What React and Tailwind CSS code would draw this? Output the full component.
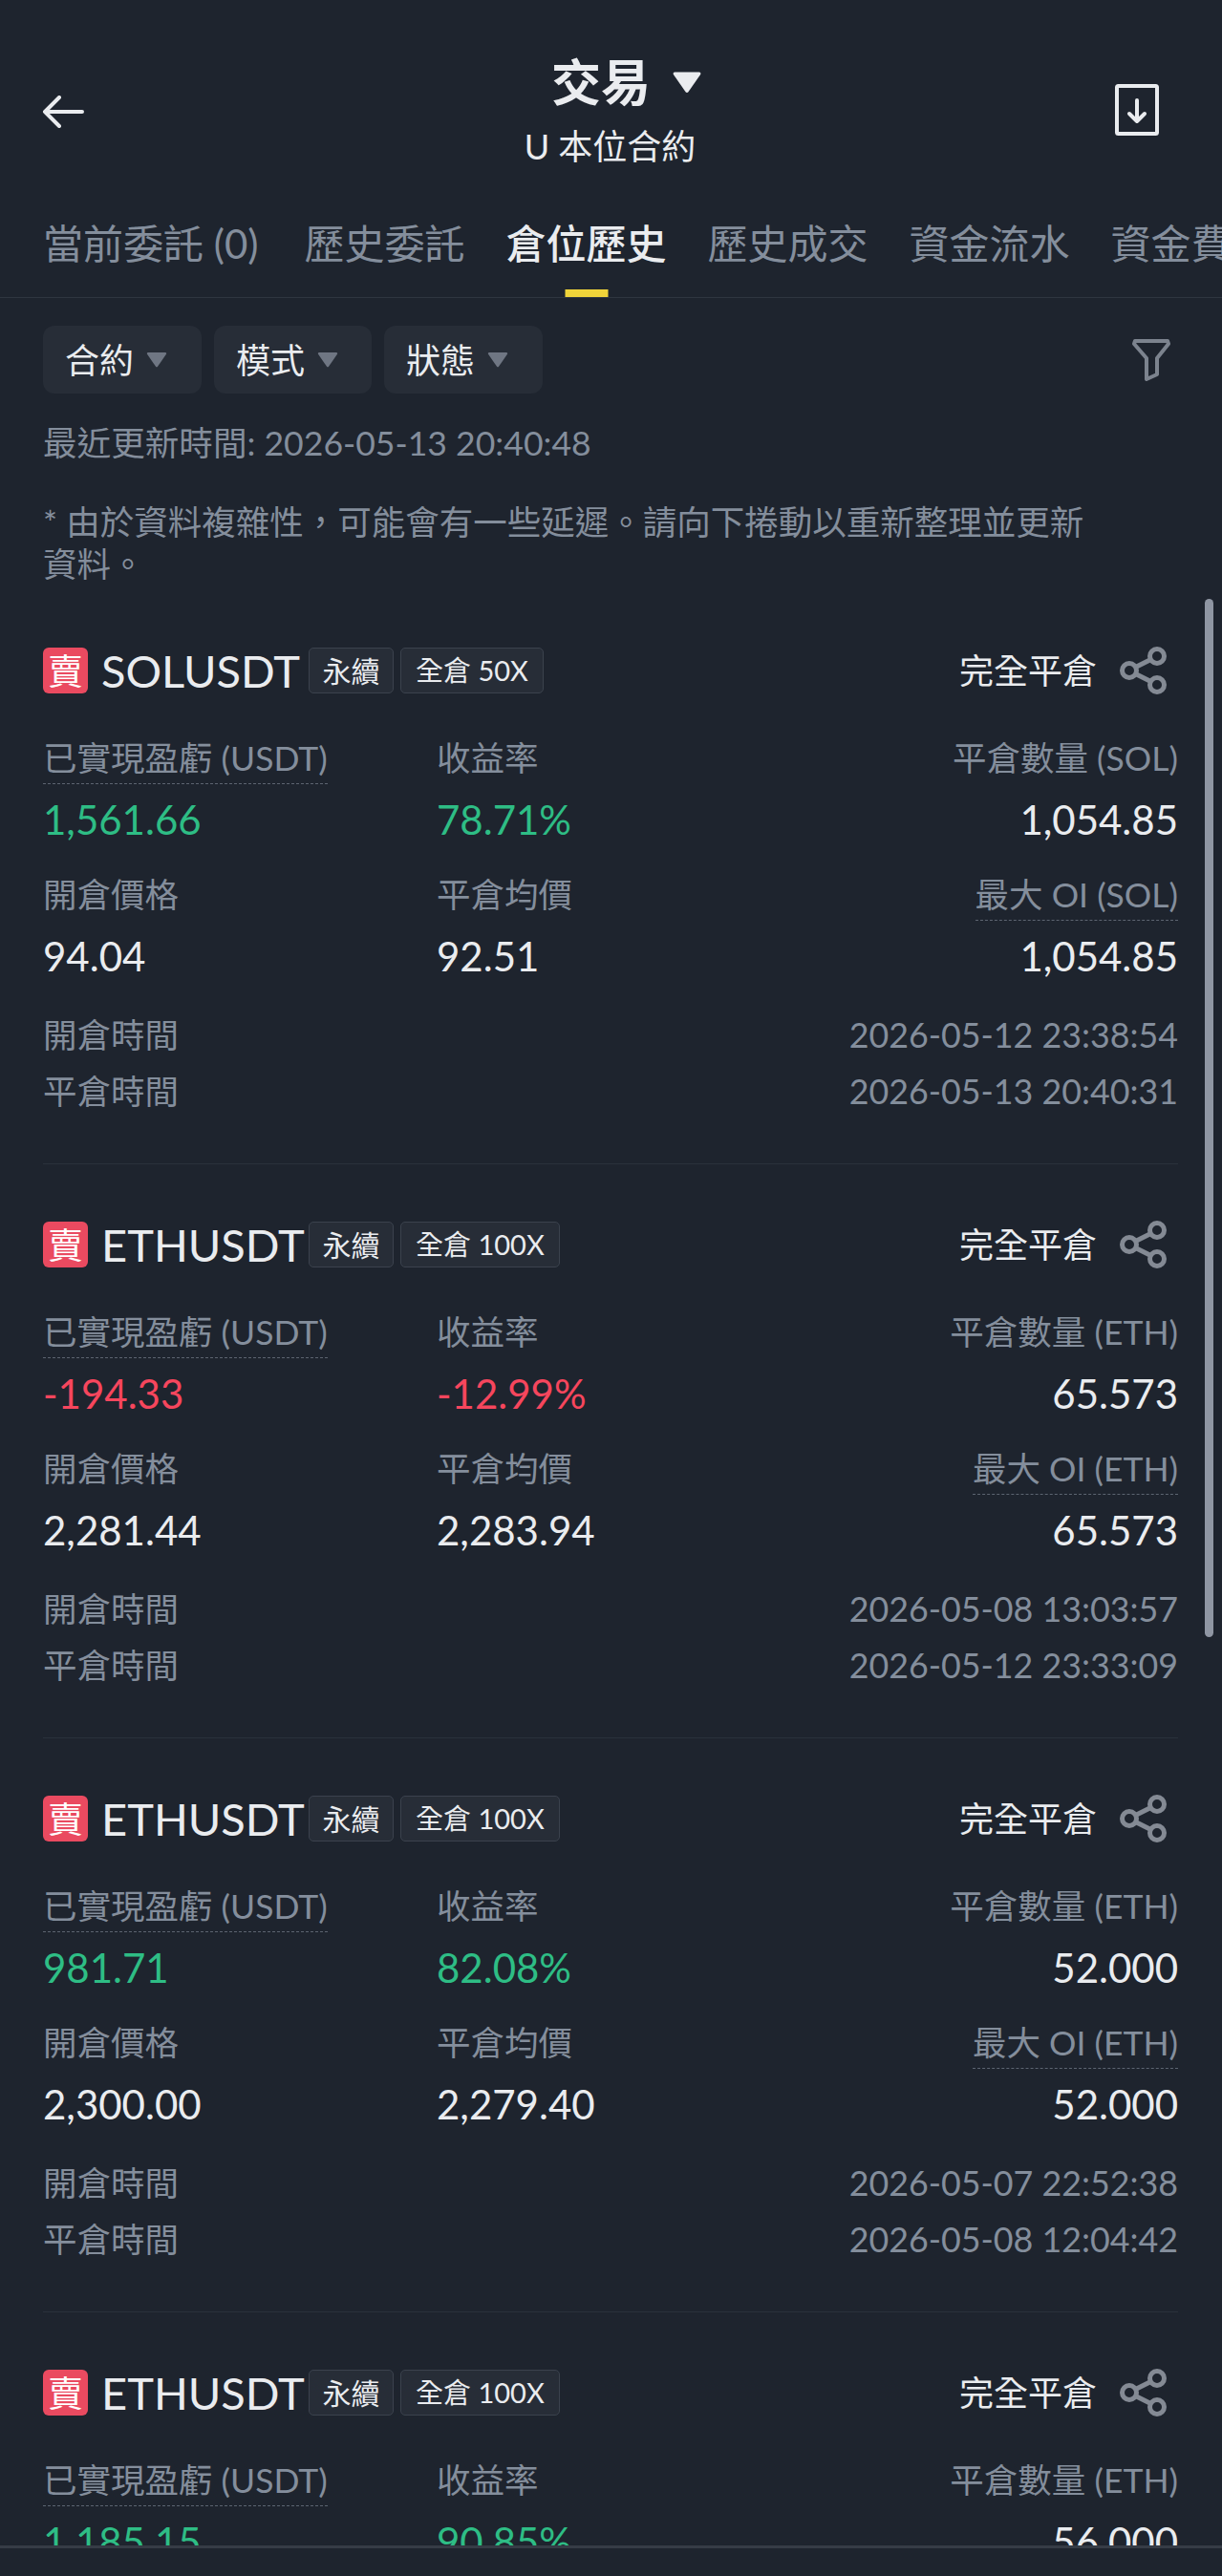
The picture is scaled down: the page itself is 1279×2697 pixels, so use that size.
const FONT = "font-['Lato','Noto_Sans_CJK_TC',sans-serif]";
const NOTE = "* 由於資料複雜性\uFF0C可能會有一些延遲。請向下捲動以重新整理並更新資料。";

const tabs = [
  { t: "當前委託 (0)", first: true },
  { t: "歷史委託" },
  { t: "倉位歷史", active: true },
  { t: "歷史成交" },
  { t: "資金流水" },
  { t: "資金費用" },
];

const cards = [
  { sym: "SOLUSDT", lev: "全倉 50X", unit: "SOL", pnl: "1,561.66", roi: "78.71%", up: true, qty: "1,054.85", open: "94.04", close: "92.51", oi: "1,054.85", t1: "2026-05-12 23:38:54", t2: "2026-05-13 20:40:31" },
  { sym: "ETHUSDT", lev: "全倉 100X", unit: "ETH", pnl: "-194.33", roi: "-12.99%", up: false, qty: "65.573", open: "2,281.44", close: "2,283.94", oi: "65.573", t1: "2026-05-08 13:03:57", t2: "2026-05-12 23:33:09" },
  { sym: "ETHUSDT", lev: "全倉 100X", unit: "ETH", pnl: "981.71", roi: "82.08%", up: true, qty: "52.000", open: "2,300.00", close: "2,279.40", oi: "52.000", t1: "2026-05-07 22:52:38", t2: "2026-05-08 12:04:42" },
  { sym: "ETHUSDT", lev: "全倉 100X", unit: "ETH", pnl: "1,185.15", roi: "90.85%", up: true, qty: "56.000", open: "2,300.00", close: "2,279.40", oi: "56.000", t1: "2026-05-07 22:52:38", t2: "2026-05-08 12:04:42" },
];

function Caret({ className }) {
  return (
    <svg viewBox="0 0 22 17" className={className} fill="currentColor">
      <path d="M2 1h18c1 0 1.500 1 1 1.800l-9 13c-.5.7-1.500.7-2 0l-9-13C.5 2 1 1 2 1z" />
    </svg>
  );
}

function Share() {
  return (
    <svg viewBox="0 0 50 50" className="w-[50px] h-[50px] text-[#848a94]" fill="none" stroke="currentColor" strokeWidth="5">
      <circle cx="39" cy="10" r="7.500" />
      <circle cx="39" cy="40" r="7.500" />
      <circle cx="10" cy="25" r="7.500" />
      <path d="M16.500 21.500 32.500 13.500M16.500 28.500 32.500 36.500" />
    </svg>
  );
}

function Card({ c }) {
  const color = c.up ? "text-[#2ebd85]" : "text-[#f6465d]";
  return (
    <div className="ml-[45px] mr-[46px] h-[601px] pt-[60px] border-b border-[#2a313b]">
      <div className="flex items-center h-[48px]">
        <div className="w-[47px] h-[48px] rounded-[6px] bg-[#ea4a60] flex items-center justify-center text-[37px] leading-none text-white">賣</div>
        <div className="ml-[14px] w-[217px] text-[47px] leading-[48px] text-[#eaecef]">{c.sym}</div>
        <div className="h-[48px] w-[89px] rounded-[5px] bg-[#272d37] border border-[#3b424d] flex items-center justify-center text-[30px] text-[#eaecef]">永續</div>
        <div className="ml-[7px] h-[48px] px-[15px] rounded-[5px] bg-[#272d37] border border-[#3b424d] flex items-center justify-center text-[29px] text-[#eaecef] whitespace-nowrap">{c.lev}</div>
        <div className="ml-auto text-[36px] text-[#eaecef] whitespace-nowrap">完全平倉</div>
        <div className="ml-[24px] mr-[11px]"><Share /></div>
      </div>
      <div className="mt-[46px] grid grid-cols-[412px_1fr_auto] text-[35.5px]">
        <div className="h-[49px] flex justify-start"><span className="block h-[49px] leading-[44px] text-[#848e9c] border-b border-dashed border-[#5c6470]">已實現盈虧 (USDT)</span></div>
        <div className="h-[49px] leading-[44px] text-[#848e9c]">收益率</div>
        <div className="h-[49px] leading-[44px] text-[#848e9c] text-right">平倉數量 ({c.unit})</div>

        <div className={`mt-[12px] h-[50px] leading-[50px] text-[42px] ${color}`}>{c.pnl}</div>
        <div className={`mt-[12px] h-[50px] leading-[50px] text-[42px] ${color}`}>{c.roi}</div>
        <div className="mt-[12px] h-[50px] leading-[50px] text-[42px] text-[#eaecef] text-right">{c.qty}</div>

        <div className="mt-[32px] h-[49px] leading-[44px] text-[#848e9c]">開倉價格</div>
        <div className="mt-[32px] h-[49px] leading-[44px] text-[#848e9c]">平倉均價</div>
        <div className="mt-[32px] h-[49px] flex justify-end"><span className="block h-[49px] leading-[44px] text-[#848e9c] border-b border-dashed border-[#5c6470]">最大 OI ({c.unit})</span></div>

        <div className="mt-[12px] h-[50px] leading-[50px] text-[42px] text-[#eaecef]">{c.open}</div>
        <div className="mt-[12px] h-[50px] leading-[50px] text-[42px] text-[#eaecef]">{c.close}</div>
        <div className="mt-[12px] h-[50px] leading-[50px] text-[42px] text-[#eaecef] text-right">{c.oi}</div>
      </div>
      <div className="mt-[36px] flex justify-between items-center h-[44px]">
        <span className="text-[35.5px] text-[#848e9c]">開倉時間</span>
        <span className="text-[35.8px] text-[#848e9c]">{c.t1}</span>
      </div>
      <div className="mt-[15px] flex justify-between items-center h-[44px]">
        <span className="text-[35.5px] text-[#848e9c]">平倉時間</span>
        <span className="text-[35.8px] text-[#848e9c]">{c.t2}</span>
      </div>
    </div>
  );
}

export default function App() {
  return (
    <div className={`${FONT} relative w-[1279px] h-[2697px] overflow-hidden bg-[#1e242e] flex flex-col`}>
      <header className="h-[190px] flex-none flex items-start justify-between px-[44px]">
        <svg viewBox="0 0 44 34" className="mt-[100px] w-[44px] h-[34px] text-[#eaecef]" fill="none" stroke="currentColor" strokeWidth="4" strokeLinecap="round" strokeLinejoin="round">
          <path d="M42 17H3M18 2 3 17l15 15" />
        </svg>
        <div className="mt-[54px] ml-[58px] flex flex-col items-center">
          <div className="flex items-center h-[64px]">
            <span className="text-[52px] leading-[64px] font-bold text-[#eaecef]">交易</span>
            <Caret className="ml-[21px] w-[34px] h-[24px] text-[#eaecef]" />
          </div>
          <div className="mt-[13px] text-[36px] leading-[44px] text-[#eaecef] -ml-[36px]">U 本位合約</div>
        </div>
        <svg viewBox="0 0 46 54" className="mt-[88px] mr-[22px] w-[46px] h-[54px] text-[#eaecef]" fill="none" stroke="currentColor" strokeWidth="4" strokeLinecap="round" strokeLinejoin="round">
          <rect x="2" y="2" width="42" height="50" rx="1.500" />
          <path d="M23 17v22M15 31l8 8 8-8" />
        </svg>
      </header>

      <nav className="h-[122px] flex-none border-b border-[#2f3640] flex gap-[43px] pl-[45px] overflow-hidden">
        {tabs.map((t) => (
          <div key={t.t} className={`relative flex-none h-[121px] ${t.first ? "mr-[5px]" : ""}`}>
            <div className={`mt-[41px] text-[42px] leading-[48px] whitespace-nowrap ${t.active ? "font-medium text-[#eaecef]" : "text-[#848e9c]"}`}>{t.t}</div>
            {t.active && <div className="absolute bottom-0 left-1/2 -translate-x-1/2 w-[45px] h-[8px] bg-[#f0d43a]" />}
          </div>
        ))}
      </nav>

      <div className="mt-[29px] flex-none flex items-center px-[45px] h-[71px]">
        {[["合約", 166], ["模式", 165], ["狀態", 166]].map(([f, w]) => (
          <div key={f} className="mr-[13px] h-[71px] rounded-[12px] bg-[#272d37] flex items-center pl-[23px]" style={{ width: w }}>
            <span className="text-[36px] text-[#eaecef]">{f}</span>
            <Caret className="ml-[13px] w-[22px] h-[17px] text-[#6f7683]" />
          </div>
        ))}
        <svg viewBox="0 0 40 44" className="ml-auto mr-[9px] w-[40px] h-[44px] text-[#7c838e]" fill="none" stroke="currentColor" strokeWidth="4" strokeLinejoin="round">
          <path d="M3 2h34l1 3-12 15v17l-11 5V20L2 5z" />
        </svg>
      </div>

      <div className="mt-[30px] px-[45px] flex-none text-[35.6px] leading-[44px] text-[#848e9c]">最近更新時間: 2026-05-13 20:40:48</div>
      <div className="mt-[39px] pl-[45px] pr-[120px] flex-none text-[35.5px] leading-[44px] text-[#848e9c]">{NOTE}</div>

      <div className="flex-1 min-h-0 overflow-hidden">
        <div className="mt-[5px]">
          {cards.map((c, i) => <Card key={i} c={c} />)}
        </div>
      </div>

      <div className="h-[32px] flex-none border-t-[3px] border-[#363c46] bg-[#1e242e]" />

      <div className="absolute left-[1261px] top-[627px] w-[9px] h-[1087px] rounded-full bg-[#8f96a3]" />
    </div>
  );
}
